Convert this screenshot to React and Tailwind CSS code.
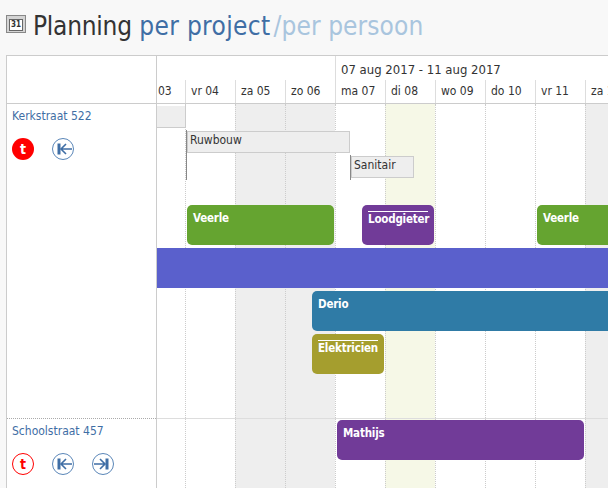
const FONT = { fontFamily: '"DejaVu Sans Condensed", "DejaVu Sans", sans-serif' };

const days = [
  { label: '03', w: 'w-[28px]', text: 'pl-[1px]' },
  { label: 'vr 04' }, { label: 'za 05', off: true }, { label: 'zo 06', off: true },
  { label: 'ma 07' }, { label: 'di 08', today: true }, { label: 'wo 09' },
  { label: 'do 10' }, { label: 'vr 11' }, { label: 'za 12', off: true },
];

function Arrow({ dir = 'left' }) {
  return (
    <svg width="22" height="22" viewBox="0 0 22 22" className="shrink-0">
      <circle cx="11" cy="11" r="10.5" fill="#fff" stroke="#5a86b8" strokeWidth="1" />
      <g transform={dir === 'right' ? 'matrix(-1 0 0 1 22 0)' : undefined} fill="none" stroke="#3f6ea5" strokeWidth="1.6">
        <path d="M7 5.5V16.5" strokeWidth="3" />
        <path d="M20 11H9M14 6l-5 5 5 5" />
      </g>
    </svg>
  );
}

function T({ solid }) {
  return (
    <div className={`w-[22px] h-[22px] rounded-full flex items-center justify-center text-[14px] font-bold leading-none ${solid ? 'bg-[#ff0000] text-white' : 'bg-white text-[#ff0000] border border-[#ff0000]'}`}>t</div>
  );
}

function Bar({ cls, label, line }) {
  return (
    <div className={`absolute h-10 rounded-[5px] px-1.5 text-white text-[11.5px] tracking-[-0.2px] font-bold leading-none ${cls}`}>
      {line ? (
        <div className="border-t border-white mt-[6px] pt-[2px] whitespace-nowrap">{label}</div>
      ) : (
        <div className="pt-[8px]">{label}</div>
      )}
    </div>
  );
}

function Task({ cls, label }) {
  return (
    <div className={`absolute h-[22px] bg-[#eeeeee] border border-[#cccccc] pl-[2px] text-[12px] leading-[16px] text-[#333] ${cls}`}>{label}</div>
  );
}

function Columns() {
  return (
    <div className="flex h-full">
      {days.map((d, i) => (
        <div key={i} className={`${d.w || 'w-[50px]'} shrink-0 ${i ? 'border-l border-dotted border-[#cccccc]' : ''} ${d.off ? 'bg-[#eeeeee]' : d.today ? 'bg-[#f6f8e7]' : 'bg-white'}`} />
      ))}
    </div>
  );
}

export default function App() {
  return (
    <div className="w-[608px] h-[488px] overflow-hidden bg-[#f8f8f8]" style={FONT}>
      <div className="h-[55px] flex items-start pl-[6px] pt-[8px]">
        <div className="mt-[7px] w-[20px] h-[18px] bg-[#d4d4d4] border border-[#888] flex items-center justify-center">
          <div className="w-[14px] h-[12px] mt-[2px] bg-white border border-[#666] flex items-center justify-center text-[8px] font-bold leading-none text-[#333]">31</div>
        </div>
        <div className="ml-[7px] text-[26px] leading-[36px] whitespace-nowrap text-[#333333]">
          <span className="tracking-[-0.25px]">Planning</span> <span className="text-[#3f6ea5] tracking-[0.35px]">per project</span>
          <span className="text-[#a9c5de] ml-[3px] tracking-[0.1px]">/per persoon</span>
        </div>
      </div>

      <div className="ml-[6px] h-[433px] bg-white border-t border-l border-[#cccccc] flex overflow-hidden">
        <div className="w-[150px] shrink-0 border-r border-[#cccccc] flex flex-col">
          <div className="h-[48px] shrink-0 border-b border-[#cccccc]" />
          <div className="h-[315px] shrink-0 border-b border-dotted border-[#aaaaaa] pl-[5px]">
            <div className="pt-[4px] text-[12px] leading-[16px] text-[#3f6ea5]">Kerkstraat 522</div>
            <div className="flex gap-[18px] mt-[14px]"><T solid /><Arrow /></div>
          </div>
          <div className="pl-[5px]">
            <div className="pt-[4px] text-[12px] leading-[16px] text-[#3f6ea5]">Schoolstraat 457</div>
            <div className="flex gap-[18px] mt-[14px]"><T /><Arrow /><Arrow dir="right" /></div>
          </div>
        </div>

        <div className="flex-1 min-w-0 flex flex-col">
          <div className="h-[48px] shrink-0 border-b border-[#cccccc] flex flex-col text-[12px] text-[#333333]">
            <div className="h-[24px] shrink-0 flex">
              <div className="w-[178px] shrink-0" />
              <div className="border-l border-[#dddddd] pl-[5px] pt-[5px] leading-[18px] whitespace-nowrap text-[13px]">07 aug 2017 - 11 aug 2017</div>
            </div>
            <div className="flex flex-1">
              {days.map((d, i) => (
                <div key={i} className={`${d.w || 'w-[50px]'} shrink-0 whitespace-nowrap leading-[22px] ${d.text || 'pl-[5px]'} ${i ? 'border-l border-[#dddddd]' : ''}`}>{d.label}</div>
              ))}
            </div>
          </div>

          <div className="relative flex-1">
            <Columns />
            <div className="absolute left-0 right-0 top-[314px] h-px bg-[#dddddd]" />

            <div className="absolute left-0 top-[2px] w-[29px] h-[22px] bg-[#eeeeee] border-b border-r border-[#cccccc]" />
            <div className="absolute left-[29px] top-[26px] w-px h-[50px] bg-[#888888]" />
            <Task cls="left-[30px] top-[27px] w-[163px]" label="Ruwbouw" />
            <div className="absolute left-[193px] top-[51px] w-px h-[25px] bg-[#888888]" />
            <Task cls="left-[194px] top-[52px] w-[63px]" label="Sanitair" />

            <Bar cls="left-[30px] top-[101px] w-[147px] bg-[#65a430]" label="Veerle" />
            <Bar cls="left-[205px] top-[101px] w-[72px] bg-[#713b98]" label="Loodgieter" line />
            <Bar cls="left-[380px] top-[101px] w-[120px] bg-[#65a430]" label="Veerle" />
            <div className="absolute left-0 right-0 top-[144px] h-10 bg-[#5a60cc]" />
            <Bar cls="left-[155px] top-[187px] w-[340px] bg-[#2f7ba6]" label="Derio" />
            <Bar cls="left-[155px] top-[230px] w-[72px] bg-[#a59e2e]" label="Elektricien" line />
            <Bar cls="left-[180px] top-[316px] w-[247px] bg-[#713b98]" label="Mathijs" />
          </div>
        </div>
      </div>
    </div>
  );
}
